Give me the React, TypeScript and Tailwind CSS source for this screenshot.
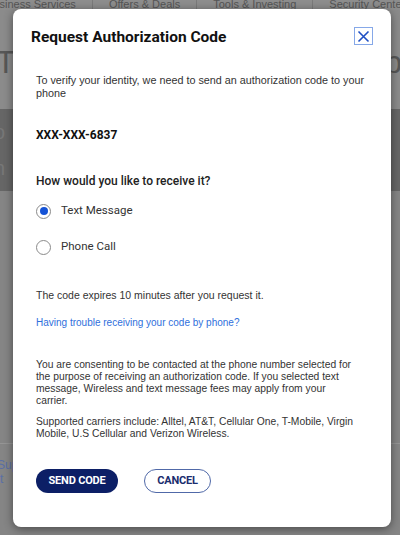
import React, { useState } from "react";

const navItems = ["Business Services", "Offers & Deals", "Tools & Investing", "Security Center", "Open"];

const RadioOption: React.FC<{ label: string; checked: boolean; onSelect: () => void }> = ({ label, checked, onSelect }) => {
  return (
    <label className="flex items-center gap-[10px] h-[20px] cursor-pointer" onClick={onSelect}>
      <span className="w-[15px] h-[15px] rounded-full border border-[#8a8a8a] flex items-center justify-center bg-white">
        {checked && <span className="w-[8px] h-[8px] rounded-full bg-[#1553d6]"></span>}
      </span>
      <span className="text-[11.5px] text-[#333] font-['Roboto',sans-serif]">{label}</span>
    </label>
  );
};

export default function App() {
  const [method, setMethod] = useState("text");

  return (
    <div className="relative w-[400px] h-[535px] overflow-hidden bg-[#858585] font-['Liberation_Sans',Arial,sans-serif]">
      {/* dimmed page behind the dialog */}
      <div className="flex flex-col">
        <div className="h-[16px] bg-[#8d8d8d] flex items-start -mt-[6px] text-[11px] text-[#555] whitespace-nowrap">
          {navItems.map((item, i) => (
            <div key={item} className={`px-[16px] h-[20px] flex items-center ${i === 0 ? "-ml-[30px]" : ""} border-r border-[#7a7a7a]`}>
              {item}
            </div>
          ))}
        </div>
        <div className="h-[99px] bg-[#8b8b8b] flex items-center justify-between text-[32px] text-[#575757] pt-[4px]">
          <span className="-ml-[4px]">Ta</span>
          <span className="-mr-[2px]">p</span>
        </div>
        <div className="h-[82px] bg-[#666] flex flex-col justify-center gap-[6px] text-[20px] text-[#777] -ml-[6px]">
          <span>o</span>
          <span>n</span>
        </div>
        <div className="h-[253px] bg-[#858585] border-b border-[#959595]"></div>
        <div className="flex flex-col text-[12px] text-[#5a6fa6] leading-[14px] pt-[14px]">
          <span className="-ml-[3px]">Sup</span>
          <span>t</span>
        </div>
      </div>

      {/* dialog */}
      <div className="absolute left-[13px] top-[9px] w-[378px] h-[518px] bg-white rounded-[8px] shadow-[0_2px_10px_rgba(0,0,0,0.45)] flex flex-col">
        <div className="flex items-start justify-between pl-[18px] pr-[18px] pt-[18px]">
          <h2 className="text-[15.5px] leading-[20px] font-bold text-[#111] font-['Roboto',sans-serif]">
            Request Authorization Code
          </h2>
          <button className="w-[19px] h-[18px] border border-[#86a8e8] flex items-center justify-center">
            <svg width="13" height="13" viewBox="0 0 13 13">
              <path d="M1.5 1.5 L11.5 11.5 M11.5 1.5 L1.5 11.5" stroke="#1f4fc4" strokeWidth="1.6" />
            </svg>
          </button>
        </div>

        <div className="flex flex-col pl-[23px] pr-[18px] pt-[27px] text-[#333]">
          <p className="text-[10.8px] leading-[12.5px]">To verify your identity, we need to send an authorization code to your phone</p>

          <p className="mt-[29px] text-[12px] leading-[14px] font-bold text-[#111] font-['Roboto',sans-serif]">XXX-XXX-6837</p>

          <p className="mt-[32px] text-[12px] leading-[14px] font-medium text-[#222] font-['Roboto',sans-serif]">
            How would you like to receive it?
          </p>

          <div className="flex flex-col gap-[16px] mt-[13px]">
            <RadioOption label="Text Message" checked={method === "text"} onSelect={() => setMethod("text")} />
            <RadioOption label="Phone Call" checked={method === "call"} onSelect={() => setMethod("call")} />
          </div>

          <p className="mt-[32px] text-[10.5px] leading-[12.5px]">The code expires 10 minutes after you request it.</p>

          <a className="mt-[15px] text-[10px] leading-[12.5px] text-[#2f6fdc] cursor-pointer">Having trouble receiving your code by phone?</a>

          <p className="mt-[30px] text-[10.3px] leading-[12px]">
            You are consenting to be contacted at the phone number selected for
            <br />
            the purpose of receiving an authorization code. If you selected text
            <br />
            message, Wireless and text message fees may apply from your
            <br />
            carrier.
          </p>

          <p className="mt-[9px] text-[10.3px] leading-[12px]">
            Supported carriers include: Alltel, AT&amp;T, Cellular One, T-Mobile, Virgin Mobile, U.S Cellular and Verizon Wireless.
          </p>

          <div className="flex items-center gap-[26px] mt-[29px]">
            <button className="w-[82px] h-[24px] rounded-full bg-[#0c1f66] text-white text-[11px] font-bold font-['Roboto',sans-serif] tracking-[-0.2px]">
              SEND CODE
            </button>
            <button className="w-[67px] h-[24px] rounded-full border border-[#5069a8] text-[#1a2d6e] text-[11px] font-bold font-['Roboto',sans-serif] tracking-[-0.2px]">
              CANCEL
            </button>
          </div>
        </div>
      </div>
    </div>
  );
}
